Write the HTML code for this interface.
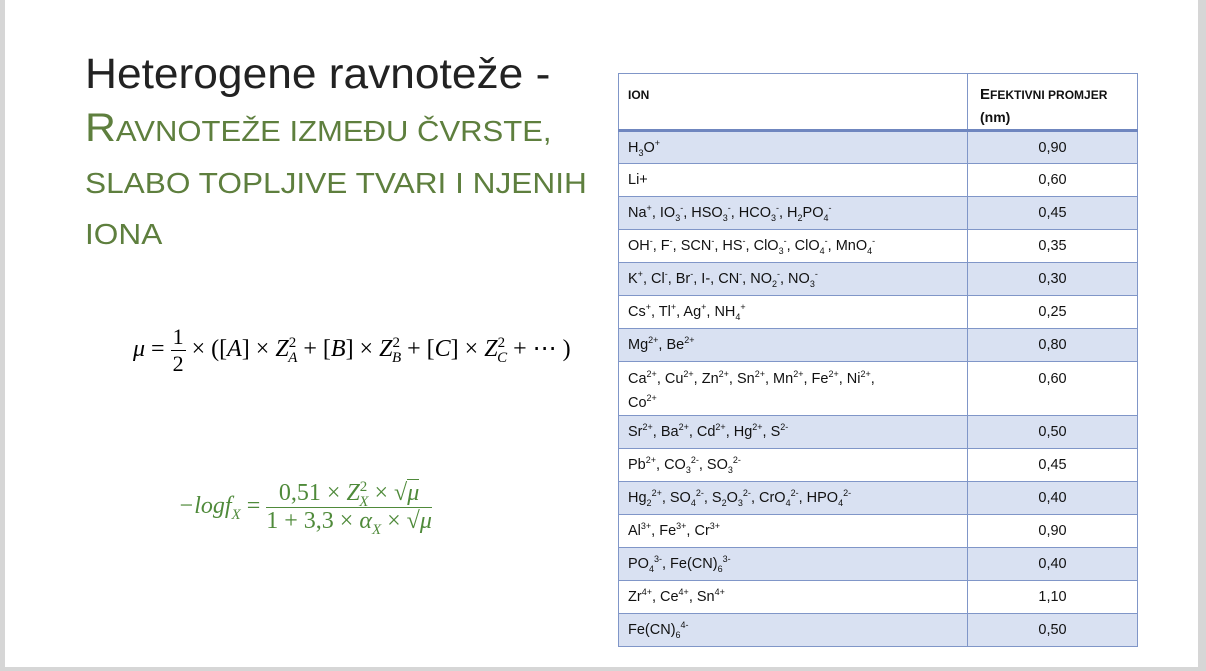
<!DOCTYPE html>
<html><head><meta charset="utf-8"><style>
*{margin:0;padding:0;box-sizing:border-box}
html,body{width:1206px;height:671px;overflow:hidden;background:#d6d6d6;font-family:"Liberation Sans",sans-serif}
#slide{position:absolute;left:5px;top:0;width:1193px;height:667px;background:#fff}
.t{position:absolute;left:85px;white-space:nowrap;transform-origin:0 0}
.g{color:#5e7f3e}
table{position:absolute;left:618px;top:73px;width:520px;border-collapse:collapse;font-size:14.5px;color:#111;table-layout:fixed}
td{border:1.5px solid #8096c8;padding:0 9px;height:33px;vertical-align:middle;line-height:18px}
td:nth-child(2){text-align:center;width:170px}
tr.b td{background:#d9e1f2}
tr.h td{height:57px;border-bottom:3px solid #6f86bf;font-weight:bold;font-size:12px;vertical-align:top;padding-top:10px;text-align:left;line-height:22px}
tr.h td:nth-child(2){padding-left:12px}
tr.tall td{height:54px;vertical-align:top;padding-top:5px;line-height:24px}
sub,sup{font-size:9px;line-height:0}
.m{position:absolute;font-family:"Liberation Serif",serif;font-size:24px;white-space:nowrap}
.m sub,.m sup{font-size:15px}
.frac{display:inline-block;vertical-align:middle;text-align:center}
.frac>span{display:block}
</style></head><body>
<div id="slide"></div>
<div class="t" style="top:50px;font-size:43px;color:#222;transform:scaleX(1.03)">Heterogene ravnoteže -</div>
<div class="t g" style="top:106px;font-size:29px;transform:scaleX(1.07)"><span style="font-size:40px">R</span>AVNOTEŽE IZMEĐU ČVRSTE,</div>
<div class="t g" style="top:168px;font-size:29px;transform:scaleX(1.09)">SLABO TOPLJIVE TVARI I NJENIH</div>
<div class="t g" style="top:219px;font-size:29px;transform:scaleX(1.09)">IONA</div>

<div class="m" style="left:133px;top:324px"><i>μ</i> = <span class="frac" style="font-size:22px"><span style="border-bottom:1px solid #000;padding:0 2px">1</span><span>2</span></span> × ([<i>A</i>] × <i>Z</i><sup>2</sup><sub style="margin-left:-8px"><i>A</i></sub> + [<i>B</i>] × <i>Z</i><sup>2</sup><sub style="margin-left:-8px"><i>B</i></sub> + [<i>C</i>] × <i>Z</i><sup>2</sup><sub style="margin-left:-8px"><i>C</i></sub> + ⋯ )</div>

<div class="m" style="left:178px;top:480px;color:#4f8a3a"><i>−logf<sub>X</sub></i> = <span class="frac"><span style="border-bottom:1.5px solid #4f8a3a;padding:0 2px">0,51 × <i>Z</i><sup>2</sup><sub style="margin-left:-8px"><i>X</i></sub> × √<i style="border-top:1px solid #4f8a3a">μ</i></span><span>1 + 3,3 × <i>α<sub>X</sub></i> × √<i style="border-top:1px solid #4f8a3a">μ</i></span></span></div>

<table>
<tr class="h"><td>ION</td><td><span style="font-size:15px">E</span>FEKTIVNI PROMJER<br><span style="font-size:14px">(nm)</span></td></tr>
<tr class="b"><td>H<sub>3</sub>O<sup>+</sup></td><td>0,90</td></tr>
<tr><td>Li+</td><td>0,60</td></tr>
<tr class="b"><td>Na<sup>+</sup>, IO<sub>3</sub><sup>-</sup>, HSO<sub>3</sub><sup>-</sup>, HCO<sub>3</sub><sup>-</sup>, H<sub>2</sub>PO<sub>4</sub><sup>-</sup></td><td>0,45</td></tr>
<tr><td>OH<sup>-</sup>, F<sup>-</sup>, SCN<sup>-</sup>, HS<sup>-</sup>, ClO<sub>3</sub><sup>-</sup>, ClO<sub>4</sub><sup>-</sup>, MnO<sub>4</sub><sup>-</sup></td><td>0,35</td></tr>
<tr class="b"><td>K<sup>+</sup>, Cl<sup>-</sup>, Br<sup>-</sup>, I-, CN<sup>-</sup>, NO<sub>2</sub><sup>-</sup>, NO<sub>3</sub><sup>-</sup></td><td>0,30</td></tr>
<tr><td>Cs<sup>+</sup>, Tl<sup>+</sup>, Ag<sup>+</sup>, NH<sub>4</sub><sup>+</sup></td><td>0,25</td></tr>
<tr class="b"><td>Mg<sup>2+</sup>, Be<sup>2+</sup></td><td>0,80</td></tr>
<tr class="tall"><td>Ca<sup>2+</sup>, Cu<sup>2+</sup>, Zn<sup>2+</sup>, Sn<sup>2+</sup>, Mn<sup>2+</sup>, Fe<sup>2+</sup>, Ni<sup>2+</sup>,<br>Co<sup>2+</sup></td><td>0,60</td></tr>
<tr class="b"><td>Sr<sup>2+</sup>, Ba<sup>2+</sup>, Cd<sup>2+</sup>, Hg<sup>2+</sup>, S<sup>2-</sup></td><td>0,50</td></tr>
<tr><td>Pb<sup>2+</sup>, CO<sub>3</sub><sup>2-</sup>, SO<sub>3</sub><sup>2-</sup></td><td>0,45</td></tr>
<tr class="b"><td>Hg<sub>2</sub><sup>2+</sup>, SO<sub>4</sub><sup>2-</sup>, S<sub>2</sub>O<sub>3</sub><sup>2-</sup>, CrO<sub>4</sub><sup>2-</sup>, HPO<sub>4</sub><sup>2-</sup></td><td>0,40</td></tr>
<tr><td>Al<sup>3+</sup>, Fe<sup>3+</sup>, Cr<sup>3+</sup></td><td>0,90</td></tr>
<tr class="b"><td>PO<sub>4</sub><sup>3-</sup>, Fe(CN)<sub>6</sub><sup>3-</sup></td><td>0,40</td></tr>
<tr><td>Zr<sup>4+</sup>, Ce<sup>4+</sup>, Sn<sup>4+</sup></td><td>1,10</td></tr>
<tr class="b"><td>Fe(CN)<sub>6</sub><sup>4-</sup></td><td>0,50</td></tr>
</table>
</body></html>
